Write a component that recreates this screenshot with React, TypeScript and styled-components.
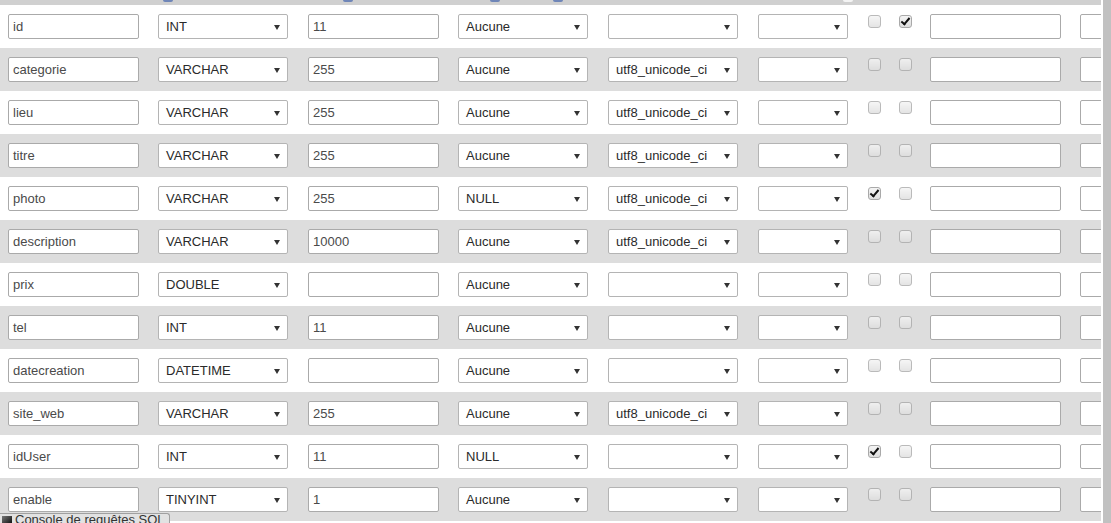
import React from "react";
import styled, { createGlobalStyle } from "styled-components";

const GlobalStyle = createGlobalStyle`
  html, body {
    margin: 0;
    padding: 0;
    background: #ffffff;
    overflow: hidden;
  }
  body {
    font-family: "Liberation Sans", Arial, sans-serif;
    font-size: 13px;
    color: #333;
  }
`;

type Field = {
  name: string;
  type: string;
  length: string;
  def: string;
  collation: string;
  isNull: boolean;
  ai: boolean;
};

const fields: Field[] = [
  { name: "id", type: "INT", length: "11", def: "Aucune", collation: "", isNull: false, ai: true },
  { name: "categorie", type: "VARCHAR", length: "255", def: "Aucune", collation: "utf8_unicode_ci", isNull: false, ai: false },
  { name: "lieu", type: "VARCHAR", length: "255", def: "Aucune", collation: "utf8_unicode_ci", isNull: false, ai: false },
  { name: "titre", type: "VARCHAR", length: "255", def: "Aucune", collation: "utf8_unicode_ci", isNull: false, ai: false },
  { name: "photo", type: "VARCHAR", length: "255", def: "NULL", collation: "utf8_unicode_ci", isNull: true, ai: false },
  { name: "description", type: "VARCHAR", length: "10000", def: "Aucune", collation: "utf8_unicode_ci", isNull: false, ai: false },
  { name: "prix", type: "DOUBLE", length: "", def: "Aucune", collation: "", isNull: false, ai: false },
  { name: "tel", type: "INT", length: "11", def: "Aucune", collation: "", isNull: false, ai: false },
  { name: "datecreation", type: "DATETIME", length: "", def: "Aucune", collation: "", isNull: false, ai: false },
  { name: "site_web", type: "VARCHAR", length: "255", def: "Aucune", collation: "utf8_unicode_ci", isNull: false, ai: false },
  { name: "idUser", type: "INT", length: "11", def: "NULL", collation: "", isNull: true, ai: false },
  { name: "enable", type: "TINYINT", length: "1", def: "Aucune", collation: "", isNull: false, ai: false },
];

const Page = styled.div`
  display: flex;
  width: 1111px;
  height: 523px;
  overflow: hidden;
  position: relative;
`;

const Main = styled.div`
  width: 1101px;
  display: flex;
  flex-direction: column;
  overflow: hidden;
`;

const Scrollbar = styled.div`
  width: 8px;
  margin-left: 2px;
  background: #c1c1c1;
`;

const HeaderStrip = styled.div`
  height: 5px;
  flex-shrink: 0;
  background: #d0d0d0;
  display: flex;
  align-items: flex-start;
`;

const HeaderBit = styled.span<{ $left: number; $color: string }>`
  width: 10px;
  height: 2px;
  margin-left: ${(p) => p.$left}px;
  border-radius: 0 0 5px 5px;
  background: ${(p) => p.$color};
`;

const Row = styled.div<{ $alt: boolean }>`
  height: 43px;
  flex-shrink: 0;
  box-sizing: border-box;
  padding: 9px 0 0 8px;
  display: grid;
  grid-template-columns: 150px 150px 150px 150px 150px 110px 31px 31px 150px 150px;
  align-items: start;
  background: ${(p) => (p.$alt ? "#dddddd" : "#ffffff")};
`;

const TextBox = styled.div`
  width: 131px;
  height: 25px;
  box-sizing: border-box;
  border: 1px solid #aaaaaa;
  border-radius: 2px;
  background: #fff;
  padding: 0 4px;
  line-height: 23px;
  color: #4a4a4a;
  white-space: nowrap;
  overflow: hidden;
`;

const SelectBox = styled.div<{ $width: number }>`
  position: relative;
  width: ${(p) => p.$width}px;
  height: 25px;
  box-sizing: border-box;
  border: 1px solid #b4b4b4;
  border-radius: 2px;
  background: #fff;
  padding: 0 20px 0 7px;
  line-height: 23px;
  color: #2a2a2a;
  white-space: nowrap;
  overflow: hidden;

  &::after {
    content: "";
    position: absolute;
    right: 7px;
    top: 10px;
    border-left: 3px solid transparent;
    border-right: 3px solid transparent;
    border-top: 5px solid #333;
  }
`;

const Check = styled.div<{ $checked: boolean }>`
  position: relative;
  width: 13px;
  height: 13px;
  margin-top: 1px;
  box-sizing: border-box;
  border: 1px solid #a9a9a9;
  border-radius: 3px;
  background: linear-gradient(#f4f4f4, #dedede);
  opacity: ${(p) => (p.$checked ? 1 : 0.8)};

  &::after {
    content: "";
    display: ${(p) => (p.$checked ? "block" : "none")};
    position: absolute;
    left: 3px;
    top: 0px;
    width: 3px;
    height: 7px;
    border: solid #111;
    border-width: 0 2.5px 2.5px 0;
    transform: rotate(40deg);
  }
`;

const ConsoleTab = styled.div`
  position: absolute;
  left: 0;
  bottom: 0;
  width: 170px;
  height: 10px;
  box-sizing: border-box;
  background: #e2e2e2;
  border: 1px solid #a0a0a0;
  border-bottom: none;
  border-left: none;
  border-radius: 0 3px 0 0;
  display: flex;
  align-items: flex-start;
  overflow: hidden;
  font-size: 13px;
  line-height: 14px;
  color: #333;
`;

const ConsoleIcon = styled.span`
  width: 10px;
  height: 10px;
  margin: 2px 3px 0 2px;
  flex-shrink: 0;
  background: linear-gradient(135deg, #777, #000);
`;

const ConsoleLabel = styled.span`
  margin-top: -1px;
  white-space: nowrap;
`;

export default function App() {
  return (
    <>
      <GlobalStyle />
      <Page>
        <Main>
          <HeaderStrip>
            <HeaderBit $left={163} $color="#6f86b8" />
            <HeaderBit $left={170} $color="#6f86b8" />
            <HeaderBit $left={137} $color="#6f86b8" />
            <HeaderBit $left={53} $color="#6f86b8" />
            <HeaderBit $left={280} $color="#f4f4f4" />
          </HeaderStrip>
          {fields.map((f, i) => (
            <Row key={f.name} $alt={i % 2 === 1}>
              <TextBox>{f.name}</TextBox>
              <SelectBox $width={130}>{f.type}</SelectBox>
              <TextBox>{f.length}</TextBox>
              <SelectBox $width={130}>{f.def}</SelectBox>
              <SelectBox $width={130}>{f.collation}</SelectBox>
              <SelectBox $width={90} />
              <Check $checked={f.isNull} />
              <Check $checked={f.ai} />
              <TextBox />
              <TextBox />
            </Row>
          ))}
        </Main>
        <Scrollbar />
        <ConsoleTab>
          <ConsoleIcon />
          <ConsoleLabel>Console de requêtes SQL</ConsoleLabel>
        </ConsoleTab>
      </Page>
    </>
  );
}
